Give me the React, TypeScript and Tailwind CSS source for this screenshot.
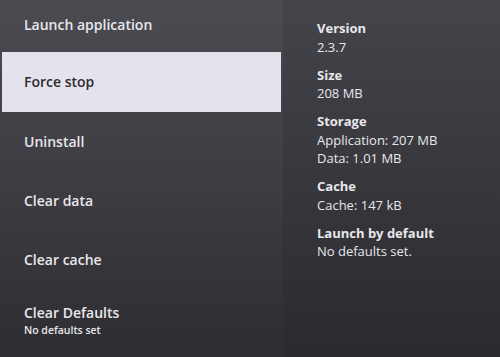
import React from 'react';

const actions = [
  { label: 'Launch application' },
  { label: 'Force stop', active: true },
  { label: 'Uninstall' },
  { label: 'Clear data' },
  { label: 'Clear cache' },
  { label: 'Clear Defaults', sub: 'No defaults set' },
];

const info = [
  { title: 'Version', lines: ['2.3.7'] },
  { title: 'Size', lines: ['208 MB'] },
  { title: 'Storage', lines: ['Application: 207 MB', 'Data: 1.01 MB'] },
  { title: 'Cache', lines: ['Cache: 147 kB'] },
  { title: 'Launch by default', lines: ['No defaults set.'] },
];

const App: React.FC = () => {
  return (
    <div
      className="w-[500px] h-[357px] flex overflow-hidden text-[#e8e7ec]"
      style={{ fontFamily: '"Open Sans", "Noto Sans", sans-serif' }}
    >
      <div className="w-[283px] h-full bg-gradient-to-b from-[#4b4c52] via-[#3d3d43] to-[#2e2d32] flex flex-col pl-[2px]">
        <div className="h-[52px] flex items-center pl-[22px] pb-[4px] text-[14px] font-semibold">
          Launch application
        </div>
        {actions.slice(1).map((a) => (
          <div
            key={a.label}
            className={
              a.active
                ? 'h-[60px] w-[279px] flex flex-col justify-center pl-[22px] bg-[#e5e2ec] text-[#2c2c31] text-[14px] font-semibold'
                : a.sub
                  ? 'h-[59px] flex flex-col justify-center pl-[22px] pt-[5px] text-[14px] font-semibold'
                  : 'h-[59px] flex flex-col justify-center pl-[22px] text-[14px] font-semibold'
            }
          >
            <span className="leading-[18px]">{a.label}</span>
            {a.sub && <span className="text-[10.5px] leading-[15px] font-semibold mt-[1px]">{a.sub}</span>}
          </div>
        ))}
      </div>
      <div className="flex-1 h-full bg-gradient-to-b from-[#44454b] via-[#37373c] to-[#2b2a2f] pl-[34px] pt-[19px] flex flex-col gap-[9.5px]">
        {info.map((g) => (
          <div key={g.title} className="flex flex-col text-[13px] leading-[18.5px]">
            <span className="font-bold">{g.title}</span>
            {g.lines.map((l) => (
              <span key={l}>{l}</span>
            ))}
          </div>
        ))}
      </div>
    </div>
  );
};

export default App;
